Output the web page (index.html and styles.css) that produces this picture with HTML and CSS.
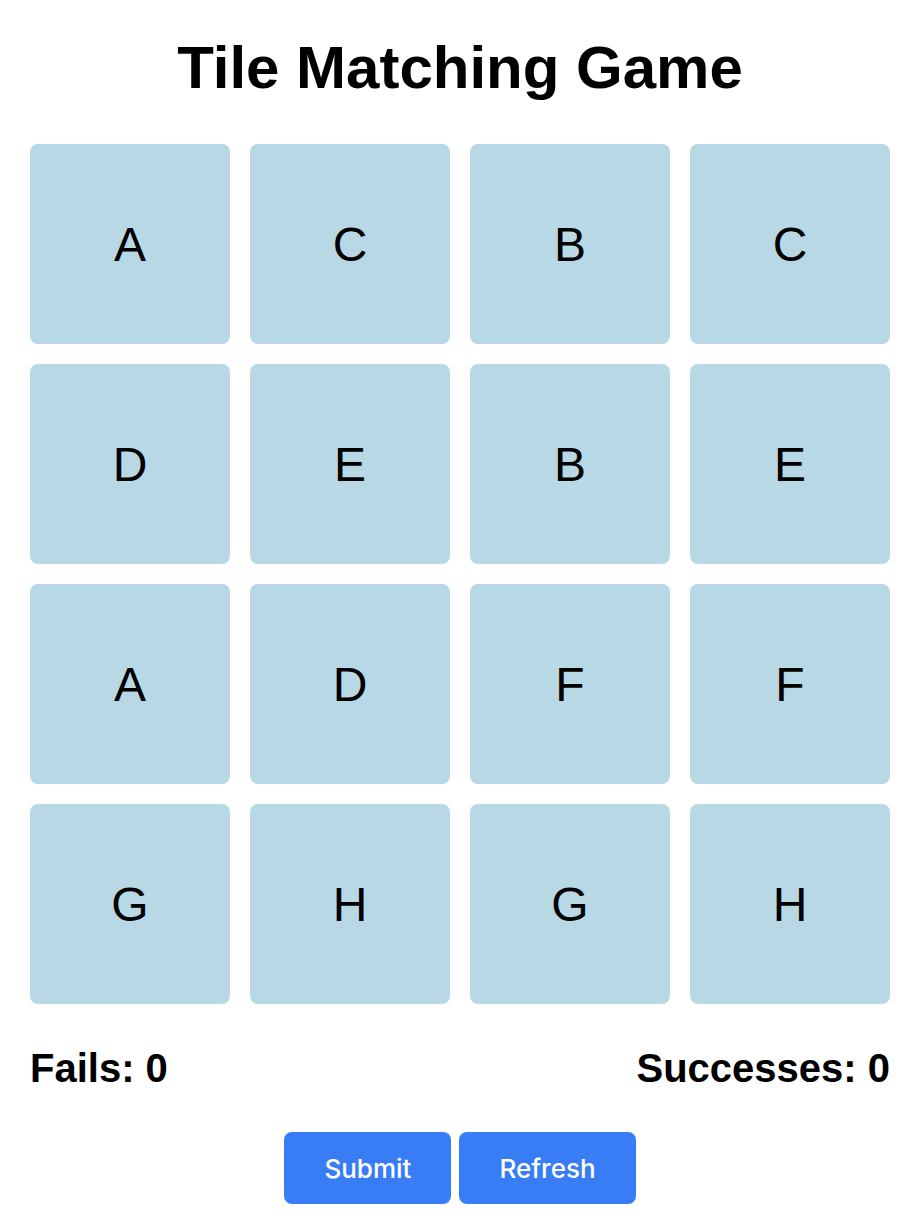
FILE: index.html
```html
<!DOCTYPE html>
<html lang="en">
<head>
<meta charset="utf-8">
<title>Tile Matching Game</title>
<link rel="stylesheet" href="styles.css">
</head>
<body>
<main class="app">
  <h1 class="title">Tile Matching Game</h1>
  <div class="board">
    <div class="tile">A</div>
    <div class="tile">C</div>
    <div class="tile">B</div>
    <div class="tile">C</div>
    <div class="tile">D</div>
    <div class="tile">E</div>
    <div class="tile">B</div>
    <div class="tile">E</div>
    <div class="tile">A</div>
    <div class="tile">D</div>
    <div class="tile">F</div>
    <div class="tile">F</div>
    <div class="tile">G</div>
    <div class="tile">H</div>
    <div class="tile">G</div>
    <div class="tile">H</div>
  </div>
  <div class="stats">
    <span class="stat">Fails: 0</span>
    <span class="stat">Successes: 0</span>
  </div>
  <div class="actions">
    <button class="btn" type="button">Submit</button>
    <button class="btn" type="button">Refresh</button>
  </div>
</main>
</body>
</html>
```
FILE: styles.css
```css
html, body {
  margin: 0;
  padding: 0;
  background: #ffffff;
}

body {
  font-family: "Liberation Sans", Arial, sans-serif;
  color: #000000;
}

.app {
  width: max-content;
  padding: 34px 30px 20px;
  display: flex;
  flex-direction: column;
}

.title {
  margin: 0 0 43px;
  font-size: 60px;
  font-weight: 700;
  text-align: center;
  line-height: 67px;
}

.board {
  display: grid;
  grid-template-columns: repeat(4, 200px);
  grid-auto-rows: 200px;
  gap: 20px;
}

.tile {
  background: #b7d8e4;
  border-radius: 8px;
  display: flex;
  align-items: center;
  justify-content: center;
  font-size: 48px;
}

.stats {
  display: flex;
  justify-content: space-between;
  margin-top: 42px;
  font-size: 40px;
  font-weight: 700;
  line-height: 45px;
}

.actions {
  display: flex;
  justify-content: center;
  gap: 8px;
  margin-top: 41px;
}

.btn {
  height: 72px;
  padding: 0 40px;
  border: none;
  border-radius: 8px;
  background: #387cf6;
  color: #ffffff;
  font-family: Inter, "Noto Sans", sans-serif;
  font-size: 26px;
  font-weight: 500;
}
```
